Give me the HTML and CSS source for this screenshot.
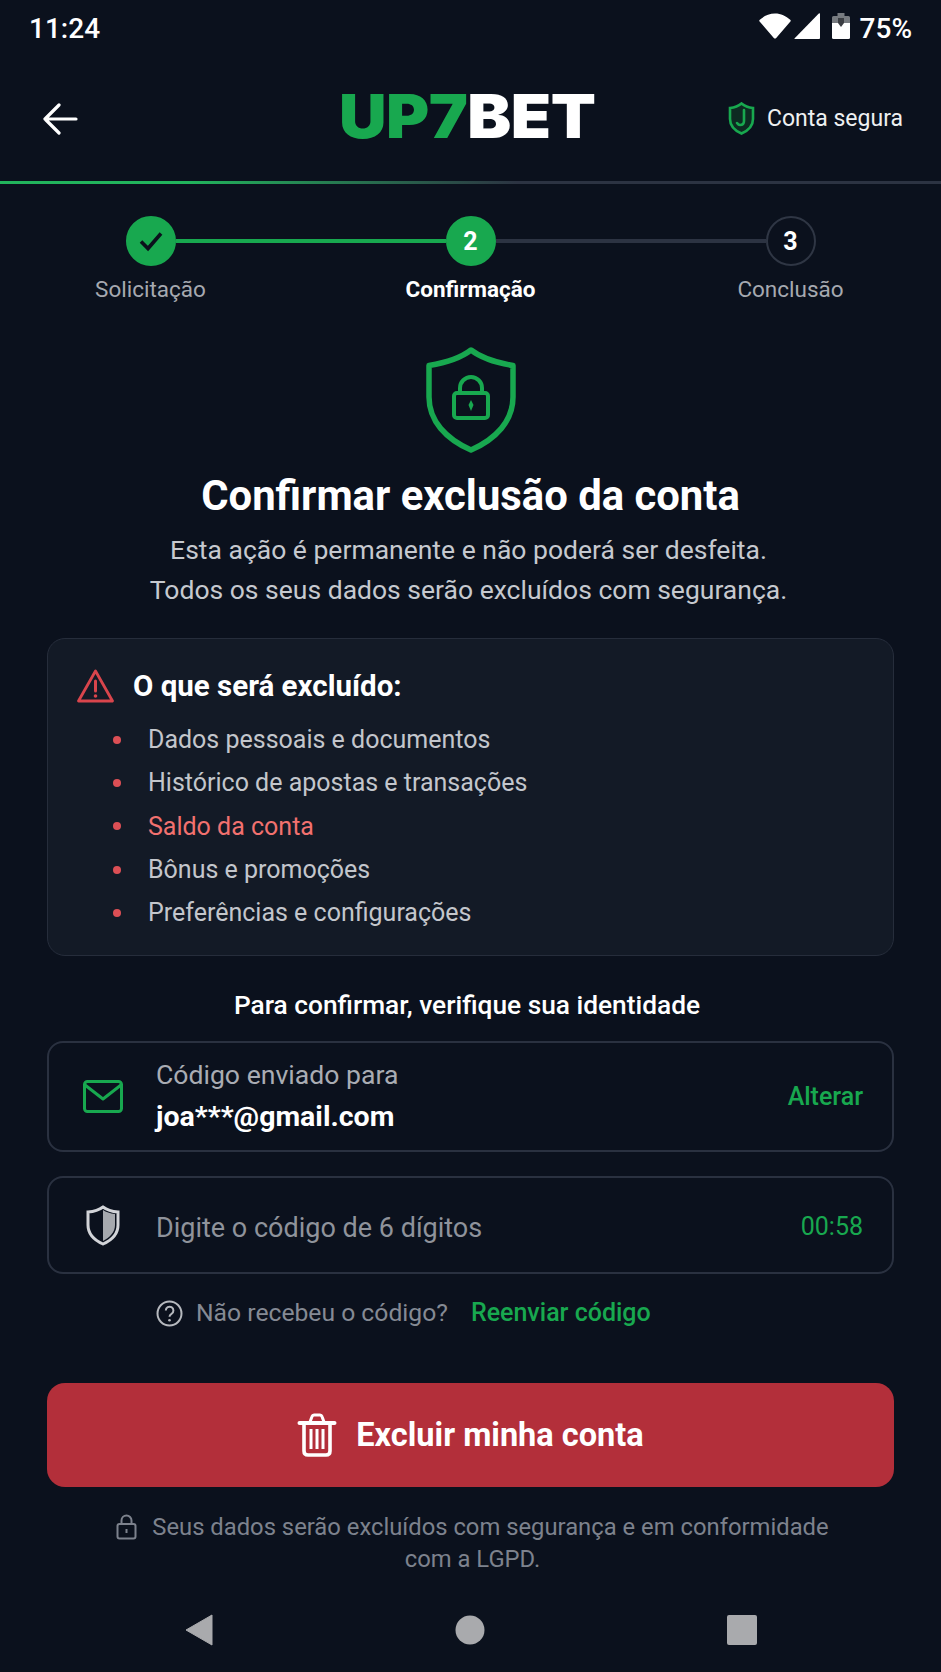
FILE: index.html
```html
<!DOCTYPE html>
<html lang="pt-BR">
<head>
  <meta charset="UTF-8">
  <title>Excluir conta</title>
  <link rel="stylesheet" href="styles.css">
</head>
<body>
<div class="app">

  <div class="status-bar">
    <span class="time">11:24</span>
    <div class="status-icons">
      <svg class="wifi" width="32" height="26" viewBox="0 0 32 26"><path d="M14.800 25 .6 8.500Q-.2 7.500.8 6.800C5 3 10 .5 16 .5s11 2.500 15.200 6.300q1 .7.2 1.700L17.200 25q-1.200 1-2.400 0z" fill="#fff"/></svg>
      <svg class="signal" width="26" height="26" viewBox="0 0 26 26"><path d="M26 1v24q0 1-1 1H1q-1 0-.3-.8L24.800.6q1.200-.8 1.200.4z" fill="#fff"/></svg>
      <svg class="battery" width="18" height="26" viewBox="0 0 18 26"><path d="M5.500 0h7v3h4q1.500 0 1.500 1.500V10H0V4.500Q0 3 1.500 3h4z" fill="#777b80"/><path d="M0 10h18v14.500q0 1.500-1.500 1.500h-15Q0 26 0 24.500z" fill="#fff"/><path d="M6 5h6v5l-3 4-3-4z" fill="#3a3d42"/></svg>
      <span class="pct">75%</span>
    </div>
  </div>

  <header class="top-bar">
    <svg class="back" width="36" height="32" viewBox="0 0 36 32"><path d="M34 16H3M17 2 3 16l14 14" fill="none" stroke="#fff" stroke-width="3.200" stroke-linecap="round" stroke-linejoin="round"/></svg>
    <div class="logo"><span class="green">UP7</span>BET</div>
    <div class="secure">
      <svg width="27" height="33" viewBox="0 0 27 33"><path d="M13.500 1.500c3 2.500 7 4 11.500 4.500v11c0 7-4.500 11.500-11.500 14.500C6.500 28.500 2 24 2 17V6c4.500-.5 8.500-2 11.500-4.500z" fill="#0d2b22" stroke="#18a84f" stroke-width="2.600"/><path d="M16 8v11q0 4-4 4-1.500 0-3-2" fill="none" stroke="#18a84f" stroke-width="2.600" stroke-linecap="round"/></svg>
      <span>Conta segura</span>
    </div>
  </header>
  <div class="top-line"></div>

  <div class="step-track">
    <div class="step-dot done">
      <svg width="26" height="22" viewBox="0 0 26 22"><path d="M3 11.500 10 18.500 23 3.500" fill="none" stroke="#0b111c" stroke-width="3.600"/></svg>
    </div>
    <div class="step-line done"></div>
    <div class="step-dot done">2</div>
    <div class="step-line"></div>
    <div class="step-dot">3</div>
  </div>
  <div class="step-labels">
    <span>Solicitação</span>
    <span class="current">Confirmação</span>
    <span>Conclusão</span>
  </div>

  <svg class="hero-shield" width="90" height="106" viewBox="0 0 90 106">
    <path d="M45 3C54 10 66 15 87 18.500V50C87 74 70 92 45 103 20 92 3 74 3 50V18.500C24 15 36 10 45 3z" fill="none" stroke="#18a84f" stroke-width="5.500" stroke-linejoin="round"/>
    <rect x="28" y="46" width="34" height="25" rx="3" fill="none" stroke="#18a84f" stroke-width="4"/>
    <path d="M34 46V41a11 11 0 0 1 22 0v5" fill="none" stroke="#18a84f" stroke-width="4"/>
    <path d="M45 53l2.500 5-2.500 6-2.500-6z" fill="#18a84f"/>
  </svg>

  <h1 class="page-title">Confirmar exclusão da conta</h1>
  <p class="page-sub">Esta ação é permanente e não poderá ser desfeita.<br>Todos os seus dados serão excluídos com segurança.</p>

  <section class="delete-card">
    <div class="delete-head">
      <svg width="37" height="34" viewBox="0 0 37 34"><path d="M18.500 2 35.500 32H1.500z" fill="none" stroke="#d9454c" stroke-width="2.800" stroke-linejoin="round"/><path d="M18.500 12v10" stroke="#d9454c" stroke-width="3" stroke-linecap="round"/><circle cx="18.500" cy="27" r="1.800" fill="#d9454c"/></svg>
      <h2>O que será excluído:</h2>
    </div>
    <ul class="delete-list">
      <li>Dados pessoais e documentos</li>
      <li>Histórico de apostas e transações</li>
      <li class="danger">Saldo da conta</li>
      <li>Bônus e promoções</li>
      <li>Preferências e configurações</li>
    </ul>
  </section>

  <p class="verify-title">Para confirmar, verifique sua identidade</p>

  <div class="field field-mail">
    <svg class="field-icon" width="40" height="33" viewBox="0 0 40 33"><rect x="1.500" y="1.500" width="37" height="30" rx="3" fill="none" stroke="#18a84f" stroke-width="3"/><path d="M2 5l18 14L38 5" fill="none" stroke="#18a84f" stroke-width="3" stroke-linejoin="round"/></svg>
    <div class="field-text">
      <span class="field-label">Código enviado para</span>
      <strong>joa***@gmail.com</strong>
    </div>
    <span class="field-action">Alterar</span>
  </div>

  <div class="field field-code">
    <svg class="field-icon" width="36" height="41" viewBox="0 0 36 41"><path d="M18 2c4 3 9 4.500 15 5v13c0 9-6 15-15 19C9 35 3 29 3 20V7c6-.5 11-2 15-5z" fill="none" stroke="#d2d4d8" stroke-width="3"/><path d="M18 5c3 2 7 3.500 12 4v11c0 7-5 12.500-12 16z" fill="#a6a9ae"/></svg>
    <span class="code-hint">Digite o código de 6 dígitos</span>
    <span class="field-action timer">00:58</span>
  </div>

  <div class="resend">
    <svg width="27" height="27" viewBox="0 0 27 27"><circle cx="13.500" cy="13.500" r="12" fill="none" stroke="#b6b9be" stroke-width="2"/><path d="M9.800 10.500a3.800 3.800 0 1 1 5.700 3.300c-1.400.8-2 1.500-2 3" fill="none" stroke="#b6b9be" stroke-width="2"/><circle cx="13.500" cy="20.300" r="1.300" fill="#b6b9be"/></svg>
    <span class="resend-q">Não recebeu o código?</span>
    <span class="resend-link">Reenviar código</span>
  </div>

  <button class="delete-btn" type="button">
    <svg width="40" height="44" viewBox="0 0 40 44"><path d="M2.500 10h35" fill="none" stroke="#fff" stroke-width="4" stroke-linecap="round"/><path d="M13 9l2-5.500q.5-1.500 2-1.500h6q1.500 0 2 1.500L27 9" fill="none" stroke="#fff" stroke-width="3"/><path d="M7 11v27q0 4 4 4h18q4 0 4-4V11" fill="none" stroke="#fff" stroke-width="3.600"/><path d="M14 16v20M20 16v20M26 16v20" stroke="#fff" stroke-width="3"/></svg>
    Excluir minha conta
  </button>

  <p class="legal">
    <svg width="21" height="26" viewBox="0 0 21 26"><rect x="1.500" y="10" width="18" height="14.500" rx="2" fill="none" stroke="#7d828d" stroke-width="2"/><path d="M5.500 10V6.500a5 5 0 0 1 10 0V10" fill="none" stroke="#7d828d" stroke-width="2"/><path d="M10.500 15v4" stroke="#7d828d" stroke-width="2"/></svg>
    Seus dados serão excluídos com segurança e em conformidade<br>com a LGPD.
  </p>

  <nav class="nav-bar">
    <svg width="28" height="32" viewBox="0 0 28 32"><path d="M27 1v30L1 16z" fill="#a9aaad" stroke="#a9aaad" stroke-linejoin="round"/></svg>
    <svg width="30" height="30" viewBox="0 0 30 30"><circle cx="15" cy="15" r="14.500" fill="#a9aaad"/></svg>
    <svg width="30" height="30" viewBox="0 0 30 30"><rect width="30" height="30" rx="2" fill="#a9aaad"/></svg>
  </nav>

</div>
</body>
</html>
```

FILE: styles.css
```css
* {
  box-sizing: border-box;
}

body {
  margin: 0;
  background-color: #0b111d;
}

.app {
  width: 941px;
  height: 1672px;
  overflow: hidden;
  background-color: #0b111d;
  color: #fff;
  font-family: Roboto, "Liberation Sans", sans-serif;
}

.status-bar {
  height: 56px;
  padding: 0 29px;
  display: flex;
  align-items: center;
  justify-content: space-between;
  font-size: 28px;
  font-weight: 500;
}

.status-icons {
  display: flex;
  align-items: center;
}

.status-icons svg {
  margin-bottom: 4px;
}

.wifi {
  margin-right: 3px;
}

.battery {
  margin-left: 12px;
  margin-right: 10px;
}

.top-bar {
  height: 125px;
  padding-right: 38px;
  padding-left: 42px;
  display: grid;
  grid-template-columns: 297px auto 1fr;
  align-items: center;
}

.logo {
  font-family: Inter, sans-serif;
  font-size: 61px;
  font-weight: 900;
  letter-spacing: -0.5px;
  line-height: 1;
  margin-top: -4px;
  transform: scaleX(1.08);
  transform-origin: left center;
}

.green {
  color: #18a84f;
}

.secure {
  justify-self: end;
  display: flex;
  align-items: center;
  gap: 12px;
  font-size: 23px;
  color: #eef0f2;
}

.top-line {
  height: 3px;
  background: linear-gradient(90deg, #22b45c 0%, #22b45c 20%, #2c3342 55%, #2c3342 100%);
}

.step-track {
  margin-top: 32px;
  padding: 0 125.5px;
  display: flex;
  align-items: center;
}

.step-dot {
  width: 50px;
  height: 50px;
  flex: none;
  border-radius: 50%;
  border: 2px solid #2f3644;
  display: flex;
  align-items: center;
  justify-content: center;
  font-size: 25px;
  font-weight: 700;
}

.step-dot.done {
  background-color: #18a84f;
  border-color: #18a84f;
}

.step-line {
  flex: 1;
  height: 4px;
  background-color: #2c3342;
}

.step-line.done {
  background-color: #18a84f;
}

.step-labels {
  margin-top: 11px;
  padding: 0 75.5px;
  display: grid;
  grid-template-columns: repeat(3, 150px);
  column-gap: 170px;
  text-align: center;
  font-size: 22.500px;
  line-height: 24px;
  color: #a6a9b0;
}

.step-labels .current {
  color: #fff;
  font-weight: 700;
}

.hero-shield {
  display: block;
  margin: 46px auto 0;
}

.page-title {
  margin: 20px 0 0;
  text-align: center;
  font-size: 41.800px;
  line-height: 46px;
  font-weight: 700;
}

.page-sub {
  margin: 11px 0 0;
  padding-right: 4px;
  text-align: center;
  font-size: 26.500px;
  line-height: 39.500px;
  color: #c6c9cf;
}

.delete-card {
  margin: 29px 47px 0;
  height: 318px;
  padding: 31px 29px 0;
  background-color: #131a26;
  border: 1px solid #262d3b;
  border-radius: 18px;
}

.delete-head {
  display: flex;
  align-items: center;
  gap: 19px;
  height: 32px;
}

.delete-head h2 {
  margin: 0;
  font-size: 29.500px;
  font-weight: 700;
}

.delete-list {
  list-style: none;
  margin: 16px 0 0;
  padding: 0 0 0 71px;
  font-size: 25px;
  line-height: 43.300px;
  color: #c3c6cc;
}

.delete-list li {
  display: flex;
  align-items: center;
}

.delete-list li::before {
  content: "";
  width: 8px;
  height: 8px;
  margin-left: -35px;
  margin-right: 27px;
  border-radius: 50%;
  background-color: #dc4f55;
}

.delete-list .danger {
  color: #f2716f;
}

.verify-title {
  margin: 34px 0 0;
  padding-right: 7px;
  text-align: center;
  font-size: 26.300px;
  font-weight: 500;
  line-height: 30px;
}

.field {
  margin: 21px 47px 0;
  padding: 0 29px 0 34px;
  display: flex;
  align-items: center;
  border: 2px solid #2a3140;
  border-radius: 16px;
}

.field-mail {
  height: 111px;
}

.field-code {
  height: 98px;
  margin-top: 24px;
}

.field-icon {
  flex: none;
  width: 40px;
  margin-right: 33px;
}

.field-text {
  flex: 1;
  display: flex;
  flex-direction: column;
  gap: 11px;
}

.field-label {
  font-size: 26.600px;
  line-height: 30px;
  color: #a9acb3;
}

.field-text strong {
  font-size: 28.500px;
  line-height: 32px;
  font-weight: 700;
}

.field-action {
  font-size: 25px;
  font-weight: 500;
  color: #18a84f;
}

.timer {
  padding-top: 2px;
  font-weight: 400;
}

.code-hint {
  flex: 1;
  padding-top: 5px;
  font-size: 27px;
  color: #8f939b;
}

.resend {
  margin-top: 24px;
  padding-left: 156px;
  display: flex;
  align-items: center;
  font-size: 24.700px;
  line-height: 30px;
}

.resend-q {
  margin-left: 13px;
  color: #858a94;
}

.resend-link {
  margin-left: 23px;
  font-size: 25px;
  font-weight: 500;
  color: #18a84f;
}

.delete-btn {
  display: flex;
  align-items: center;
  justify-content: center;
  gap: 19px;
  width: 847px;
  height: 104px;
  margin: 55px 47px 0;
  border: none;
  border-radius: 18px;
  background-color: #b32f3a;
  color: #fff;
  font-family: inherit;
  font-size: 32.500px;
  font-weight: 700;
}

.legal {
  margin: 24px 0 0;
  padding-left: 4px;
  text-align: center;
  font-size: 23.800px;
  line-height: 32px;
  color: #7d828d;
}

.legal svg {
  vertical-align: -5px;
  margin-right: 9px;
}

.nav-bar {
  margin-top: 39px;
  padding-left: 185px;
  display: grid;
  grid-template-columns: 28px 30px 30px;
  column-gap: 242px;
  align-items: center;
}
```
